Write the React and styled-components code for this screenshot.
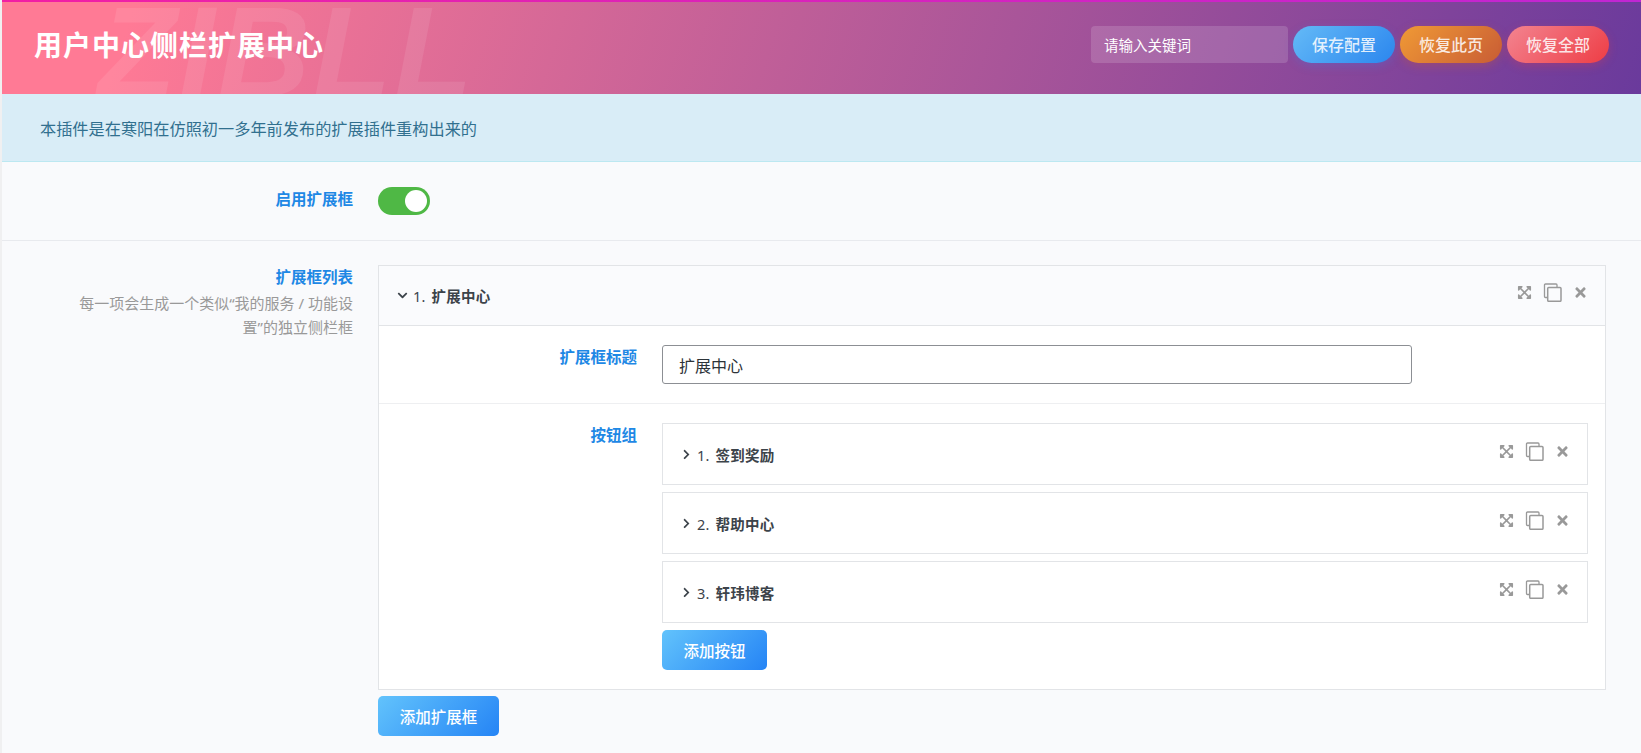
import React from 'react';
import styled, { createGlobalStyle } from 'styled-components';
import { FaExpandArrowsAlt, FaTimes, FaChevronDown, FaChevronRight } from 'react-icons/fa';

const Global = createGlobalStyle`
  html, body { margin: 0; padding: 0; background: #f0f0f1; }
  body { font-family: "Noto Sans", "Noto Sans CJK SC", sans-serif; font-size: 16px; color: #333; }
  * { box-sizing: border-box; }
`;

const Page = styled.div`
  margin-left: 2px;
  height: 753px;
  overflow: hidden;
  background: #f9fafc;
`;
const Header = styled.header`
  position: relative;
  height: 94px;
  padding: 0 32px 0 32px;
  display: flex;
  align-items: center;
  justify-content: space-between;
  overflow: hidden;
  border-top: 2px solid transparent;
  background: linear-gradient(90deg, #f21fa4, #c026d3) top/100% 2px no-repeat border-box,
    linear-gradient(108deg, #ff7a95 8%, #6a3a9c 100%) border-box;
`;
const Watermark = styled.div`
  position: absolute;
  left: 96px;
  top: -14px;
  font-family: "Liberation Sans", sans-serif;
  font-size: 128px;
  font-weight: 700;
  font-style: italic;
  letter-spacing: 3px;
  line-height: 1;
  color: rgba(255, 255, 255, 0.09);
  pointer-events: none;
`;
const Title = styled.h1`
  position: relative;
  margin: 0 0 6px;
  font-size: 28px;
  line-height: 40px;
  font-weight: 700;
  letter-spacing: 1px;
  color: #fff;
`;
const Tools = styled.div`
  position: relative;
  display: flex;
  align-items: center;
  gap: 5px;
  margin-bottom: 8px;
`;
const Search = styled.div`
  width: 197px;
  height: 37px;
  padding: 0 13px;
  display: flex;
  align-items: center;
  border-radius: 4px;
  background: rgba(255, 255, 255, 0.15);
  color: #fff;
  font-size: 14.5px;
`;
const RoundButton = styled.button`
  width: 102px;
  height: 37px;
  padding: 0;
  border: 0;
  border-radius: 19px;
  color: rgba(255, 255, 255, 0.85);
  font: 500 16px "Noto Sans", "Noto Sans CJK SC", sans-serif;
  background: linear-gradient(135deg, ${p => p.$from}, ${p => p.$to});
  box-shadow: 0 3px 10px ${p => p.$shadow};
`;
const Notice = styled.div`
  height: 68px;
  padding: 0 38px;
  display: flex;
  align-items: center;
  background: #d9edf7;
  border-bottom: 1px solid #bce8f1;
  color: #31708f;
  font-size: 16.2px;
`;
const Row = styled.section`
  display: flex;
  padding: ${p => p.$pad};
  border-bottom: ${p => (p.$line ? '1px solid #e8eaee' : '0')};
`;
const LabelCol = styled.div`
  width: 351px;
  flex: none;
  text-align: right;
`;
const Label = styled.div`
  color: #1e88e5;
  font-size: 15.5px;
  font-weight: 700;
  line-height: 24px;
`;
const Sub = styled.div`
  margin-top: 2px;
  color: #999;
  font-size: 15px;
  line-height: 24px;
`;
const Switch = styled.div`
  margin-left: 25px;
  width: 52px;
  height: 28px;
  padding: 3px;
  display: flex;
  justify-content: flex-end;
  border-radius: 14px;
  background: #4fb845;
`;
const Knob = styled.span`
  width: 22px;
  height: 22px;
  border-radius: 50%;
  background: #fff;
`;
const Right = styled.div`
  margin-left: 25px;
  width: 1228px;
`;
const Panel = styled.div`
  background: #fff;
  border: 1px solid #e2e4e7;
`;
const PanelHead = styled.div`
  height: 60px;
  padding: 0 ${p => p.$right} 0 ${p => p.$left};
  display: flex;
  align-items: center;
  justify-content: space-between;
  background: ${p => p.$bg};
  font-weight: 600;
  font-size: 14.5px;
  color: #3c434a;
  border-bottom: ${p => (p.$line ? '1px solid #e2e4e7' : '0')};
`;
const HeadTitle = styled.div`
  display: flex;
  align-items: center;
  gap: 5px;
  letter-spacing: 0.2px;
  svg { font-size: 11px; color: #3c434a; }
`;
const Num = styled.span`
  font-weight: 400;
  margin-right: 2px;
`;
const Actions = styled.div`
  display: flex;
  align-items: center;
  gap: 11px;
  margin-bottom: 6px;
  color: #999;
`;
const SubRow = styled.div`
  display: flex;
  padding: ${p => p.$pad};
  border-bottom: ${p => (p.$line ? '1px solid #eeeff1' : '0')};
`;
const SubLabel = styled.div`
  width: 258px;
  flex: none;
  text-align: right;
  color: #1e88e5;
  font-size: 15.5px;
  font-weight: 700;
  line-height: 24px;
`;
const Field = styled.div`
  margin-left: 25px;
  width: 750px;
  height: 39px;
  padding: 0 16px;
  display: flex;
  align-items: center;
  border: 1px solid #8c8f94;
  border-radius: 3px;
  background: #fff;
  color: #2c3338;
  font-size: 16px;
`;
const Items = styled.div`
  margin-left: 25px;
  width: 926px;
  display: flex;
  flex-direction: column;
  gap: 7px;
`;
const Item = styled.div`
  border: 1px solid #e2e4e7;
  background: #fff;
`;
const AddButton = styled.button`
  display: block;
  width: ${p => p.$w};
  height: 40px;
  padding: 0;
  border: 0;
  border-radius: 5px;
  color: #fff;
  font: 500 15.5px "Noto Sans", "Noto Sans CJK SC", sans-serif;
  background: linear-gradient(135deg, #62c3fc, #2584f5);
`;
const AddWrap = styled.div`
  margin-top: ${p => p.$top};
`;

const CopyIcon = () => (
  <svg width="19" height="19" viewBox="0 0 19 19" fill="none" stroke="#999" strokeWidth="1.3">
    <path d="M4 14.5H2.5a1 1 0 0 1-1-1V2a1 1 0 0 1 1-1h10.5a1 1 0 0 1 1 1v2" />
    <rect x="4.7" y="4.5" width="13.3" height="13.8" rx="1" strokeWidth="1.5" />
  </svg>
);

const ItemActions = () => (
  <Actions>
    <FaExpandArrowsAlt size={15} />
    <CopyIcon />
    <FaTimes size={15} />
  </Actions>
);

const Head = ({ n, title, open, line, bg, left, right }) => (
  <PanelHead $line={line} $bg={bg} $left={left} $right={right}>
    <HeadTitle>
      {open ? <FaChevronDown /> : <FaChevronRight />}
      <span><Num>{n}.</Num> {title}</span>
    </HeadTitle>
    <ItemActions />
  </PanelHead>
);

export default function App() {
  return (
    <Page>
      <Global />
      <Header>
        <Watermark>ZIBLL</Watermark>
        <Title>用户中心侧栏扩展中心</Title>
        <Tools>
          <Search>请输入关键词</Search>
          <RoundButton $from="#64baf7" $to="#2b86ee" $shadow="rgba(50,130,240,.25)">保存配置</RoundButton>
          <RoundButton $from="#f09a35" $to="#c85c35" $shadow="rgba(200,90,50,.35)">恢复此页</RoundButton>
          <RoundButton $from="#f38490" $to="#ee3d45" $shadow="rgba(230,60,70,.3)">恢复全部</RoundButton>
        </Tools>
      </Header>
      <Notice>本插件是在寒阳在仿照初一多年前发布的扩展插件重构出来的</Notice>
      <Row $pad="25px 0 25px" $line>
        <LabelCol><Label>启用扩展框</Label></LabelCol>
        <Switch><Knob /></Switch>
      </Row>
      <Row $pad="24px 0 0">
        <LabelCol>
          <Label>扩展框列表</Label>
          <Sub>每一项会生成一个类似“我的服务 / 功能设<br />置”的独立侧栏框</Sub>
        </LabelCol>
        <Right>
          <Panel>
            <Head n="1" title="扩展中心" open line bg="#fafbfd" left="18px" right="17px" />
            <SubRow $pad="19px 0 19px" $line>
              <SubLabel>扩展框标题</SubLabel>
              <Field>扩展中心</Field>
            </SubRow>
            <SubRow $pad="19px 0 19px">
              <SubLabel>按钮组</SubLabel>
              <Items>
                {['签到奖励', '帮助中心', '轩玮博客'].map((t, i) => (
                  <Item key={t}>
                    <Head n={i + 1} title={t} bg="#fff" left="18px" right="17px" />
                  </Item>
                ))}
                <AddButton $w="105px">添加按钮</AddButton>
              </Items>
            </SubRow>
          </Panel>
          <AddWrap $top="6px"><AddButton $w="121px">添加扩展框</AddButton></AddWrap>
        </Right>
      </Row>
    </Page>
  );
}
